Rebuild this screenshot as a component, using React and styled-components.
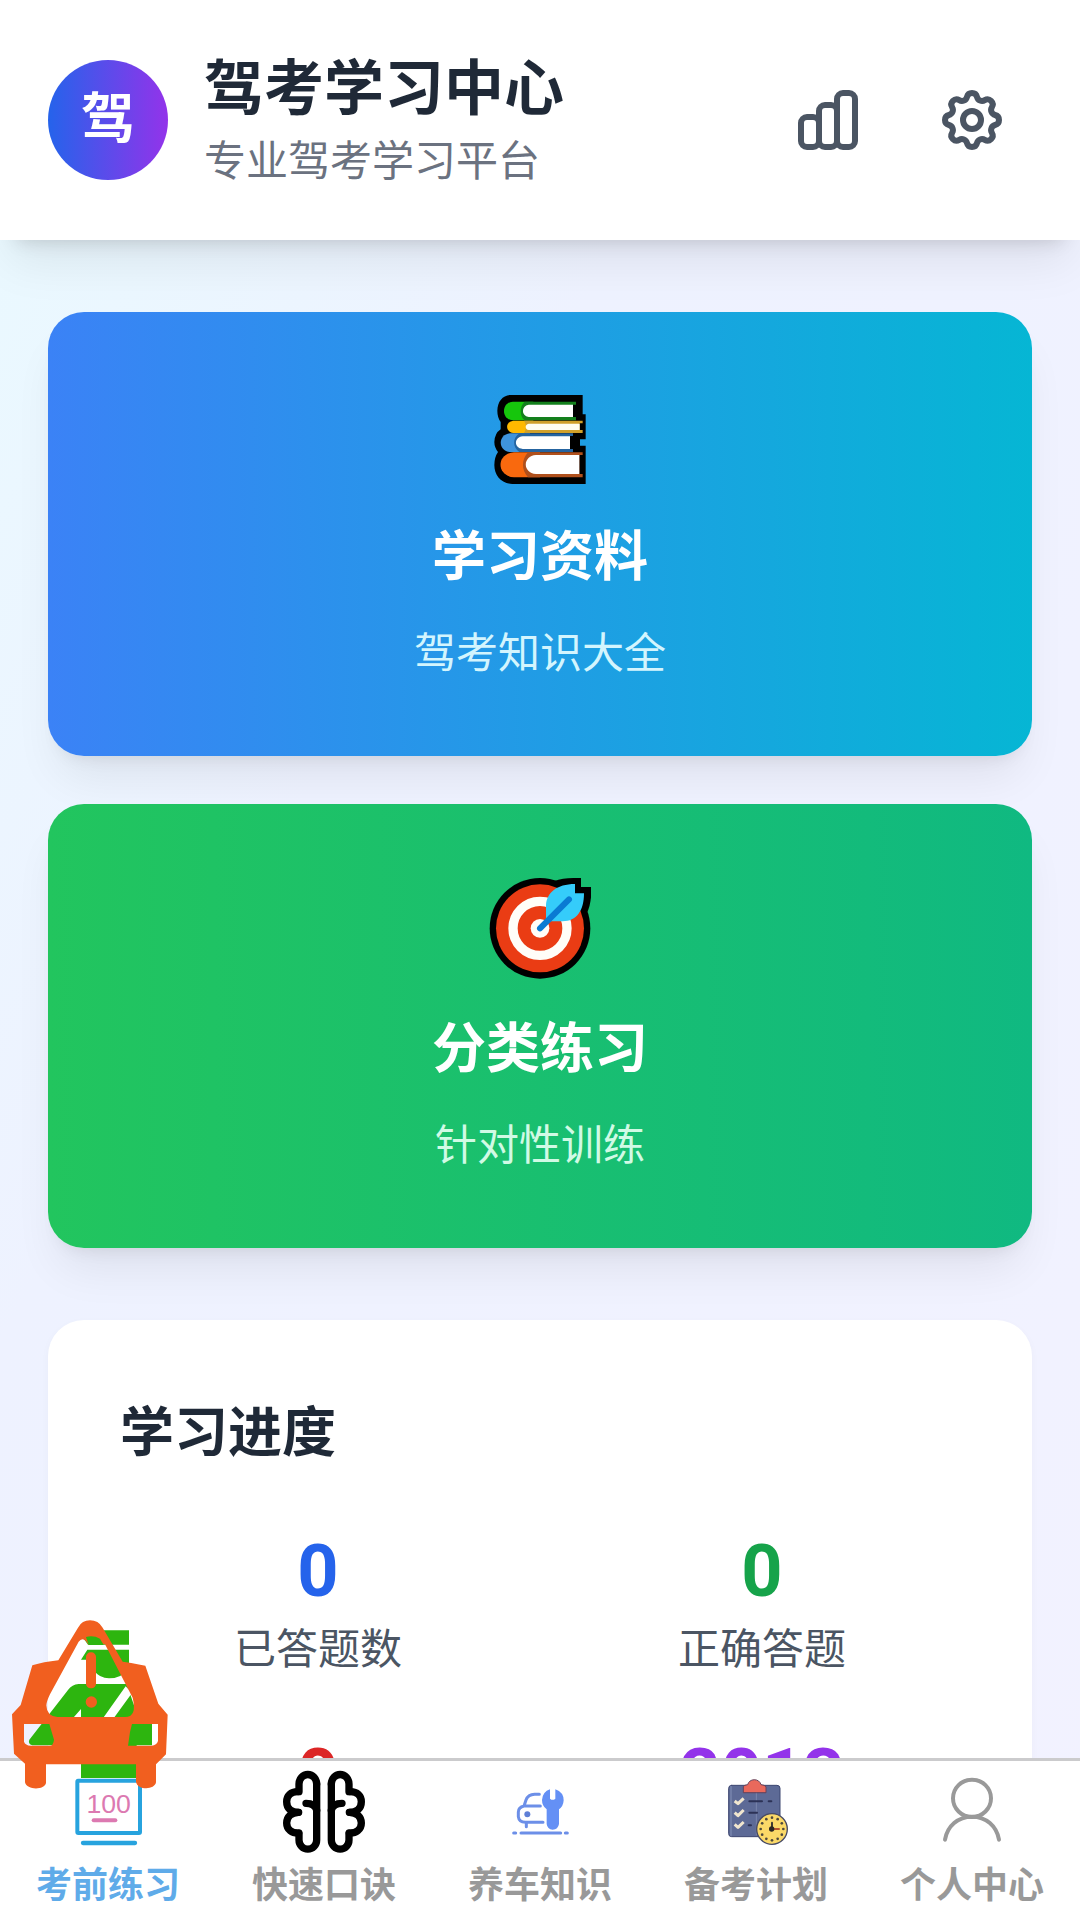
import React from "react";
import styled, { createGlobalStyle } from "styled-components";

const Global = createGlobalStyle`
  *, *::before, *::after { box-sizing: border-box; }
  body {
    margin: 0;
    font-family: Roboto, "Noto Sans CJK SC", sans-serif;
    color: #1f2937;
  }
  h1, h2, p { margin: 0; }
  button { font: inherit; color: inherit; border: 0; background: none; cursor: pointer; }
`;

const Shell = styled.div`
  display: flex;
  flex-direction: column;
  height: 100vh;
  overflow: hidden;
  background: linear-gradient(to bottom right, #e9faff 0%, #eef2ff 35%, #f2f2ff 100%);
`;

const Header = styled.header`
  flex: none;
  position: relative;
  z-index: 1;
  display: flex;
  align-items: center;
  justify-content: space-between;
  padding: 48px;
  background: #fff;
  box-shadow: 0 30px 45px -9px rgba(0, 0, 0, 0.08), 0 18px 18px -18px rgba(0, 0, 0, 0.16);
`;

const Brand = styled.div`
  display: flex;
  align-items: center;
  gap: 36px;
`;

const Avatar = styled.div`
  display: flex;
  align-items: center;
  justify-content: center;
  width: 120px;
  height: 120px;
  border-radius: 50%;
  background: linear-gradient(to right, #2563eb, #9333ea);
  color: #fff;
  font-size: 54px;
  line-height: 84px;
  font-weight: 700;
`;

const AppTitle = styled.h1`
  font-size: 60px;
  line-height: 84px;
  font-weight: 700;
`;

const AppSubtitle = styled.p`
  font-size: 42px;
  line-height: 60px;
  color: #6b7280;
`;

const Actions = styled.div`
  display: flex;
  gap: 24px;
`;

const IconButton = styled.button`
  display: flex;
  padding: 24px;
  color: #4b5563;

  svg { width: 72px; height: 72px; }
`;

const Main = styled.main`
  flex: 1;
  min-height: 0;
  overflow-y: auto;
  scrollbar-width: none;
  padding: 72px 48px;
  display: flex;
  flex-direction: column;
  gap: 72px;
`;

const CardList = styled.div`
  display: flex;
  flex-direction: column;
  gap: 48px;
`;

const FeatureCard = styled.button`
  display: flex;
  flex-direction: column;
  align-items: center;
  width: 100%;
  padding: 72px;
  border-radius: 36px;
  background: linear-gradient(to right, ${(p) => p.$from}, ${(p) => p.$to});
  color: #fff;
  box-shadow: 0 30px 45px -9px rgba(0, 0, 0, 0.07), 0 12px 18px -12px rgba(0, 0, 0, 0.1);

  svg { width: 120px; height: 120px; margin-bottom: 12px; }
`;

const FeatureTitle = styled.span`
  margin-bottom: 24px;
  font-size: 54px;
  line-height: 84px;
  font-weight: 700;
`;

const FeatureText = styled.span`
  font-size: 42px;
  line-height: 60px;
  color: ${(p) => p.$tint};
`;

const Panel = styled.section`
  flex: none;
  padding: 72px;
  border-radius: 36px;
  background: #fff;
  box-shadow: 0 3px 9px rgba(0, 0, 0, 0.03);
`;

const PanelTitle = styled.h2`
  margin-bottom: 48px;
  font-size: 54px;
  line-height: 84px;
  font-weight: 700;
`;

const StatGrid = styled.div`
  display: grid;
  grid-template-columns: 1fr 1fr;
  gap: 48px;
`;

const Stat = styled.div`
  text-align: center;
`;

const StatValue = styled.div`
  font-size: 72px;
  line-height: 96px;
  font-weight: 700;
  color: ${(p) => p.$color};
`;

const StatLabel = styled.div`
  font-size: 42px;
  line-height: 60px;
  color: #4b5563;
`;

const TabBar = styled.nav`
  flex: none;
  display: flex;
  padding: 9px 0 10px;
  border-top: 3px solid #cbcbcd;
  background: #fff;
  position: relative;
  z-index: 1;
`;

const Tab = styled.a`
  flex: 1;
  display: flex;
  flex-direction: column;
  align-items: center;
  gap: 8px;
  text-decoration: none;
  font-size: 36px;
  line-height: 48px;
  font-weight: 700;
  color: ${(p) => (p.$active ? "#5fabe9" : "#999")};

  svg { width: 84px; height: 84px; }
`;

const Floating = styled.button`
  position: fixed;
  left: 10px;
  bottom: 129px;
  z-index: 2;
  display: flex;
  padding: 0;

  svg { width: 160px; height: 174px; }
`;

const ChartIcon = () => (
  <svg viewBox="0 0 24 24" fill="none" stroke="currentColor" strokeWidth="2" strokeLinecap="round" strokeLinejoin="round" aria-hidden="true">
    <path d="M9 19v-6a2 2 0 00-2-2H5a2 2 0 00-2 2v6a2 2 0 002 2h2a2 2 0 002-2zm0 0V9a2 2 0 012-2h2a2 2 0 012 2v10m-6 0a2 2 0 002 2h2a2 2 0 002-2m0 0V5a2 2 0 012-2h2a2 2 0 012 2v14a2 2 0 01-2 2h-2a2 2 0 01-2-2z" />
  </svg>
);

const CogIcon = () => (
  <svg viewBox="0 0 24 24" fill="none" stroke="currentColor" strokeWidth="2" strokeLinecap="round" strokeLinejoin="round" aria-hidden="true">
    <path d="M10.325 4.317c.426-1.756 2.924-1.756 3.35 0a1.724 1.724 0 002.573 1.066c1.543-.94 3.31.826 2.37 2.37a1.724 1.724 0 001.065 2.572c1.756.426 1.756 2.924 0 3.35a1.724 1.724 0 00-1.066 2.573c.94 1.543-.826 3.31-2.37 2.37a1.724 1.724 0 00-2.572 1.065c-.426 1.756-2.924 1.756-3.35 0a1.724 1.724 0 00-2.573-1.066c-1.543.94-3.31-.826-2.37-2.37a1.724 1.724 0 00-1.065-2.572c-1.756-.426-1.756-2.924 0-3.35a1.724 1.724 0 001.066-2.573c-.94-1.543.826-3.31 2.37-2.37.996.608 2.296.07 2.572-1.065z" />
    <path d="M15 12a3 3 0 11-6 0 3 3 0 016 0z" />
  </svg>
);

const BooksIcon = () => (
  <svg viewBox="240 72 360 360" aria-hidden="true">
    <path fill="#000" d="M332 105H548V163H557V238H540V257H557V372H337C303 370 283 346 283 315Q283 292 294 276Q283 262 283 246Q284 220 302 208V186Q292 172 292 152C293 124 308 106 332 105Z" />
    <path fill="#16c60c" d="M338 125H400V181H338C320 179 312 167 312 153C312 139 320 127 338 125Z" />
    <path fill="#13801c" d="M374 125H528V134H519V171H528V181H374C358 167 358 139 374 125Z" />
    <path fill="#fff" d="M386 134H519V171H386C363 167 363 138 386 134Z" />
    <path fill="#ffb900" d="M340 182H400V219H340C315 216 315 185 340 182Z" />
    <path fill="#d0a02a" d="M372 182H548V190H539V210H548V219H372C380 206 380 196 372 182Z" />
    <path fill="#fffef0" d="M386 191H539V210H386C374 208 374 193 386 191Z" />
    <path fill="#3f93dc" d="M330 220H390V276H330C293 272 293 224 330 220Z" />
    <path fill="#2564a0" d="M358 220H519V228H510V267H519V276H358C337 262 337 234 358 220Z" />
    <path fill="#fff" d="M368 229H510V267H368C341 264 341 232 368 229Z" />
    <path fill="#f9690e" d="M342 277H420V352H342C288 348 288 281 342 277Z" />
    <path fill="#b0501c" d="M384 277H548V285H538V342H548V352H384C364 330 364 299 384 277Z" />
    <path fill="#fff" d="M408 285H538V342H408C367 339 367 288 408 285Z" />
  </svg>
);

const TargetIcon = () => (
  <svg viewBox="240 78 360 360" aria-hidden="true">
    <circle cx="420" cy="235" r="151" fill="#000" />
    <path fill="#000" d="M462 94Q488 84 520 84H543V111H573V140Q571 168 560 190Z" />
    <circle cx="420" cy="235" r="132" fill="#ea3c14" />
    <circle cx="420" cy="235" r="81" fill="none" stroke="#fffdf8" strokeWidth="28" />
    <circle cx="420" cy="235" r="28" fill="#fffdf8" />
    <path fill="#000" d="M520 92H543V111H573V140L556 180Z" />
    <path fill="#35ccfa" d="M525 102V130H552C552 182 530 214 488 214H438V166C440 128 470 102 525 102Z" />
    <path d="M420 235L507 148" stroke="#0a7bd3" strokeWidth="18" strokeLinecap="round" />
  </svg>
);

const ExamIcon = () => (
  <svg viewBox="198 540 252 252" aria-hidden="true">
    <rect x="232" y="572" width="188" height="157" rx="3" fill="#fff" stroke="#27a3de" strokeWidth="12" />
    <text x="326" y="668" textAnchor="middle" fontFamily="Liberation Sans, sans-serif" fontSize="80" fontWeight="400" fill="#dc79b1">100</text>
    <path d="M281 691H346" stroke="#dc79b1" strokeWidth="12" strokeLinecap="round" />
    <path d="M249 759H405" stroke="#27a3de" strokeWidth="13" strokeLinecap="round" />
  </svg>
);

const BrainHalf = () => (
  <>
    <path d="M140 72V240A26 27 0 0 1 87 240V220" />
    <path d="M140 72A26 28 0 0 0 87 72V95" />
    <path d="M85 95C62 94 50 108 50 125C50 146 64 157 86 157" />
    <path d="M85 157C62 159 50 171 50 189C50 209 66 220 86 219" />
    <path d="M140 150Q134 130 108 130" />
  </>
);

const BrainIcon = () => (
  <svg viewBox="36 30 252 252" fill="none" stroke="#000" strokeWidth="22" strokeLinecap="round" strokeLinejoin="round" aria-hidden="true">
    <BrainHalf />
    <g transform="translate(324 0) scale(-1 1)">
      <BrainHalf />
    </g>
  </svg>
);

const CarCareIcon = () => (
  <svg viewBox="414 150 252 252" fill="none" stroke="#6c8fe8" strokeWidth="9" strokeLinecap="round" strokeLinejoin="round" aria-hidden="true">
    <path d="M538 223H524Q504 224 498 240L492 258H541M492 258Q475 262 475 276V290Q477 307 496 307H549M499 308V320" />
    <circle cx="502" cy="283" r="9" fill="#5f7fd6" stroke="none" />
    <path fill="#6490f5" stroke="none" d="M570 208V236Q578 243 586 236V208Q611 217 611 241Q610 259 597 268V312Q594 329 578 329Q562 328 560 312V268Q546 258 546 240Q548 215 570 208Z" />
    <path d="M483 339H602M461 339H467M616 339H622" />
  </svg>
);

const ticks = Array.from({ length: 12 }, (_, i) => (i * Math.PI) / 6);

const PlanIcon = () => (
  <svg viewBox="162 150 252 252" fill="none" strokeLinecap="round" strokeLinejoin="round" aria-hidden="true">
    <rect x="206" y="196" width="154" height="154" rx="9" fill="#5d6a96" stroke="#3d4670" strokeWidth="3" />
    <path d="M213 200V346" stroke="#7582ab" strokeWidth="5" />
    <path d="M289 217V345" stroke="#8793b8" strokeWidth="2" />
    <path d="M250 217V200Q252 195 263 194Q267 180 283 179Q299 180 303 194Q314 195 318 200V217Z" fill="#e9695c" stroke="#6a4157" strokeWidth="3" />
    <path d="M224 243L234 251L251 235M224 278L234 287L251 270M224 313L234 322L251 306" stroke="#f0e6cf" strokeWidth="9" strokeLinecap="butt" />
    <path d="M268 244H306M326 244H334M268 278H291M266 316H273" stroke="#2c3256" strokeWidth="6" />
    <circle cx="336" cy="327" r="46" fill="#fbd968" stroke="#474a63" strokeWidth="4" />
    {ticks.map((a) => (
      <circle key={a} cx={336 + 34 * Math.sin(a)} cy={327 - 34 * Math.cos(a)} r="4" fill="#4f4a3c" />
    ))}
    <path d="M336 327V308" stroke="#3d3a33" strokeWidth="6" />
    <path d="M336 327H357" stroke="#b4532f" strokeWidth="6" />
    <circle cx="335" cy="327" r="8" fill="#2b2622" />
  </svg>
);

const PersonIcon = () => (
  <svg viewBox="810 150 252 252" fill="none" stroke="#999" strokeWidth="12" strokeLinecap="round" aria-hidden="true">
    <ellipse cx="936" cy="235" rx="57" ry="56" />
    <path d="M855 359C862 318 894 290 936 290S1010 318 1017 359" />
  </svg>
);

const CarAlertIcon = () => (
  <svg viewBox="30 80 480 522" aria-hidden="true">
    <path fill="#2db50f" d="M262 120H387V163H264L246 138Z" />
    <path fill="#2db50f" d="M262 178H387V232Q366 264 327 264Q298 262 285 244V208H243Z" />
    <path fill="#2db50f" d="M236 281H380L402 345L410 390H456V465H410V563H243V465H97Q83 460 88 448L204 299Q216 283 236 281Z" />
    <path fill="#fff" d="M377 288L310 382H342L396 308ZM243 356V382H220Z" />
    <path
      fill="#f15f1f"
      fillRule="evenodd"
      d="M234 112Q246 90 270 90Q295 90 308 112L368 214Q385 215 436 226L475 340L503 373L498 492L468 522V576C464 600 412 600 408 574V522H138V578C134 600 80 600 75 576V520L42 490L36 372L62 344L97 225Q130 215 175 210ZM236 154Q246 140 258 152L266 163L315 162L398 322Q412 380 375 380H172Q140 378 139 345Q140 332 150 312ZM72 401H148L162 448Q160 466 150 466H92Q76 465 72 454ZM396 401H474V452Q470 465 455 466H384L390 425Z"
    />
    <path fill="#2db50f" d="M258 140Q280 134 300 145L311 164H266Z" />
    <rect x="258" y="186" width="30" height="108" rx="14" fill="#f15f1f" />
    <circle cx="274" cy="335" r="17" fill="#f15f1f" />
  </svg>
);

const features = [
  { title: "学习资料", text: "驾考知识大全", from: "#3b82f6", to: "#06b6d4", tint: "#d3f5fe", Icon: BooksIcon },
  { title: "分类练习", text: "针对性训练", from: "#22c55e", to: "#10b981", tint: "#d1fae5", Icon: TargetIcon },
];

const stats = [
  { value: "0", label: "已答题数", color: "#2563eb" },
  { value: "0", label: "正确答题", color: "#16a34a" },
  { value: "0", color: "#dc2626" },
  { value: "2013", color: "#9333ea" },
];

const tabs = [
  { label: "考前练习", Icon: ExamIcon, active: true },
  { label: "快速口诀", Icon: BrainIcon },
  { label: "养车知识", Icon: CarCareIcon },
  { label: "备考计划", Icon: PlanIcon },
  { label: "个人中心", Icon: PersonIcon },
];

export default function App() {
  return (
    <Shell>
      <Global />
      <Header>
        <Brand>
          <Avatar>驾</Avatar>
          <div>
            <AppTitle>驾考学习中心</AppTitle>
            <AppSubtitle>专业驾考学习平台</AppSubtitle>
          </div>
        </Brand>
        <Actions>
          <IconButton type="button" aria-label="统计"><ChartIcon /></IconButton>
          <IconButton type="button" aria-label="设置"><CogIcon /></IconButton>
        </Actions>
      </Header>
      <Main>
        <CardList>
          {features.map(({ title, text, from, to, tint, Icon }) => (
            <FeatureCard key={title} type="button" $from={from} $to={to}>
              <Icon />
              <FeatureTitle>{title}</FeatureTitle>
              <FeatureText $tint={tint}>{text}</FeatureText>
            </FeatureCard>
          ))}
        </CardList>
        <Panel>
          <PanelTitle>学习进度</PanelTitle>
          <StatGrid>
            {stats.map((s) => (
              <Stat key={s.color}>
                <StatValue $color={s.color}>{s.value}</StatValue>
                {s.label && <StatLabel>{s.label}</StatLabel>}
              </Stat>
            ))}
          </StatGrid>
        </Panel>
      </Main>
      <TabBar>
        {tabs.map(({ label, Icon, active }) => (
          <Tab key={label} href="#" $active={active} aria-current={active ? "page" : undefined}>
            <Icon />
            <span>{label}</span>
          </Tab>
        ))}
      </TabBar>
      <Floating type="button" aria-label="驾考提醒"><CarAlertIcon /></Floating>
    </Shell>
  );
}
